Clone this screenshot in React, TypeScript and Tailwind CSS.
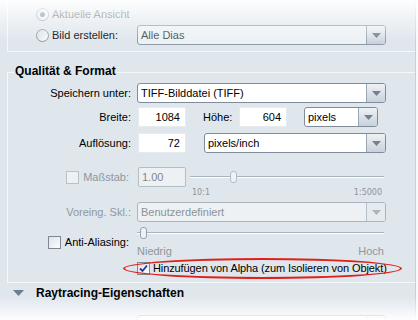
import React from 'react';

const FONT = { fontFamily: '"Liberation Sans", Arial, sans-serif' };

const Arrow = ({ disabled }: { disabled?: boolean }) => (
  <svg width="9" height="5" viewBox="0 0 9 5">
    <path d="M0 0 H9 L4.5 5 Z" fill={disabled ? '#a9b4bd' : '#6f8193'} />
  </svg>
);

const Select = ({
  value,
  width,
  disabled,
  muted,
}: {
  value: string;
  width: string;
  disabled?: boolean;
  muted?: boolean;
}) => (
  <div
    className={`${width} h-[20px] flex rounded-[3px] border ${
      disabled ? 'border-[#aab5be] bg-[#edf1f4] text-[#8a939b]' : muted ? 'border-[#8e9ba7] bg-[#edf1f4] text-[#40464c]' : 'border-[#7f8d9a] bg-white text-black'
    }`}
  >
    <div className="flex-1 flex items-center pl-[3px] text-[11px] leading-none truncate">{value}</div>
    <div
      className={`w-[19px] flex items-center justify-center border-l rounded-r-[2px] ${
        disabled ? 'border-[#b5bfc7] bg-[#e6ebef]' : 'border-[#9aa7b3] bg-linear-to-b from-[#eef2f5] to-[#c8d2db]'
      }`}
    >
      <Arrow disabled={disabled} />
    </div>
  </div>
);

const NumInput = ({ value, disabled, align = 'right' }: { value: string; disabled?: boolean; align?: 'left' | 'right' }) => (
  <div
    className={`w-[48px] h-[20px] flex items-center text-[11px] leading-none ${
      align === 'right' ? 'justify-end pr-[5px]' : 'pl-[3px] border border-[#b4bec6] rounded-[2px]'
    } ${disabled ? 'bg-[#eef1f3] text-[#7e878f]' : 'bg-white border border-[#e6ebef] text-black'}`}
  >
    {value}
  </div>
);

const Checkbox = ({ checked, disabled }: { checked?: boolean; disabled?: boolean }) => (
  <div
    className={`w-[13px] h-[13px] shrink-0 border flex items-center justify-center ${
      disabled ? 'border-[#b9c2c9] bg-[#eef1f3]' : 'border-[#7d8893] bg-linear-to-br from-[#dfe4e8] to-[#fbfcfd]'
    }`}
  >
    {checked && (
      <svg width="9" height="9" viewBox="0 0 9 9">
        <path d="M1 4.5 L3.5 7 L8 1.5" fill="none" stroke="#22369a" strokeWidth="1.8" />
      </svg>
    )}
  </div>
);

const Radio = ({ checked }: { checked?: boolean }) => (
  <div className="w-[13px] h-[13px] shrink-0 rounded-full border border-[#8a96a1] bg-linear-to-br from-[#d6dde3] to-[#fafbfc] flex items-center justify-center">
    {checked && <div className="w-[5px] h-[5px] rounded-full bg-[#4d6f9c]" />}
  </div>
);

const Slider = ({ width, thumb, disabled }: { width: string; thumb: number; disabled?: boolean }) => (
  <div className={`${width} h-[12px] relative flex items-center`}>
    <div className="w-full h-[2px] border-t border-[#aab4bd] border-b border-b-white" />
    <div
      className={`absolute top-0 w-[7px] h-[12px] rounded-[3px] border ${disabled ? 'border-[#b3bcc4]' : 'border-[#98a3ad]'} bg-[#eef2f5]`}
      style={{ left: thumb }}
    />
  </div>
);

const Label = ({ children, disabled }: { children: React.ReactNode; disabled?: boolean }) => (
  <div className={`w-[123px] shrink-0 flex items-center justify-end text-[11px] leading-none ${disabled ? 'text-[#8f979e]' : 'text-black'}`}>
    {children}
  </div>
);

const App = () => {
  return (
    <div className="w-[418px] h-[320px] overflow-hidden relative bg-[#f7f9fa]" style={FONT}>
      <div className="w-[416px] h-full bg-[#dfe6ec] border-r border-[#c8d1d9]">
        {/* Ansicht group */}
        <div className="ml-[7px] h-[52px] border-l border-b border-[#f5f8fa] pt-[4px] flex flex-col gap-[1px]">
          <div className="h-[20px] flex items-center pl-[28px]">
            <Radio checked />
            <span className="ml-[3px] text-[11px] leading-none text-[#4a5259]">Aktuelle Ansicht</span>
          </div>
          <div className="h-[20px] flex items-center">
            <div className="w-[123px] shrink-0 flex items-center pl-[28px]">
              <Radio />
              <span className="ml-[3px] text-[11px] leading-none text-black">Bild erstellen:</span>
            </div>
            <div className="ml-[6px]">
              <Select value="Alle Dias" width="w-[249px]" muted />
            </div>
          </div>
        </div>

        {/* Qualität & Format */}
        <div className="ml-[7px] mt-[20px] border-l border-t border-b border-[#f5f8fa] pb-[6px]">
          <div className="-mt-[9px] ml-[6px] w-fit h-[14px] px-[1px] bg-[#dfe6ec] flex items-center font-bold text-[12px] leading-none text-black">
            Qualität &amp; Format
          </div>

          <div className="mt-[5px] h-[20px] flex items-center">
            <Label>Speichern unter:</Label>
            <div className="ml-[6px]">
              <Select value="TIFF-Bilddatei (TIFF)" width="w-[249px]" />
            </div>
          </div>

          <div className="mt-[4px] h-[20px] flex items-center">
            <Label>Breite:</Label>
            <div className="ml-[7px]">
              <NumInput value="1084" />
            </div>
            <span className="ml-[17px] w-[29px] text-[11px] leading-none">Höhe:</span>
            <div className="ml-[7px]">
              <NumInput value="604" />
            </div>
            <div className="ml-[17px]">
              <Select value="pixels" width="w-[74px]" />
            </div>
          </div>

          <div className="mt-[6px] h-[20px] flex items-center">
            <Label>Auflösung:</Label>
            <div className="ml-[7px]">
              <NumInput value="72" />
            </div>
            <div className="ml-[18px]">
              <Select value="pixels/inch" width="w-[182px]" />
            </div>
          </div>

          <div className="mt-[14px] h-[20px] flex items-center">
            <Label disabled>
              <Checkbox disabled />
              <span className="ml-[4px] mr-[2px]">Maßstab:</span>
            </Label>
            <div className="ml-[7px]">
              <NumInput value="1.00" disabled align="left" />
            </div>
            <div className="ml-[4px]">
              <Slider width="w-[194px]" thumb={40} disabled />
            </div>
          </div>
          <div className="mt-[1px] h-[10px] flex items-center">
            <div className="w-[184px] shrink-0" />
            <div className="w-[190px] flex justify-between text-[8px] leading-none text-[#8c959c]" style={{ fontFamily: '"DejaVu Sans", sans-serif' }}>
              <span>10:1</span>
              <span>1:5000</span>
            </div>
          </div>

          <div className="mt-[4px] h-[20px] flex items-center">
            <Label disabled>Voreing. Skl.:</Label>
            <div className="ml-[6px]">
              <Select value="Benutzerdefiniert" width="w-[249px]" disabled />
            </div>
          </div>

          <div className="mt-[3px] h-[31px] flex items-start">
            <div className="w-[123px] shrink-0 pt-[7px] h-[27px] flex items-center justify-end">
              <Checkbox />
              <span className="ml-[4px] mr-[2px] text-[11px] leading-none text-black">Anti-Aliasing:</span>
            </div>
            <div className="ml-[6px] w-[247px] pt-[2px] flex flex-col">
              <Slider width="w-[247px]" thumb={3} />
              <div className="mt-[7px] h-[10px] flex justify-between text-[11px] leading-none text-[#8f979e]">
                <span>Niedrig</span>
                <span>Hoch</span>
              </div>
            </div>
          </div>

          <div className="mt-[4px] h-[16px] flex items-center relative">
            <div className="w-[123px] shrink-0" />
            <div className="ml-[6px] flex items-center">
              <Checkbox checked />
              <span className="ml-[3px] text-[11px] leading-none tracking-[-0.1px] text-black">
                Hinzufügen von Alpha (zum Isolieren von Objekt)
              </span>
            </div>
          </div>
        </div>

        {/* Raytracing */}
        <div className="mt-[2px] h-[16px] flex items-center pl-[13px]">
          <svg width="11" height="6" viewBox="0 0 11 6">
            <path d="M0 0 H11 L5.5 6 Z" fill="#6a7f93" />
          </svg>
          <span className="ml-[12px] font-bold text-[12px] leading-none text-black">Raytracing-Eigenschaften</span>
        </div>
        <div className="mt-[14px] ml-[137px]">
          <Select value="" width="w-[249px]" />
        </div>
      </div>

      {/* red highlight */}
      <div className="absolute left-[123px] top-[258px] w-[279px] h-[21px] rounded-[50%] border-2 border-[#e0201c]" />

      {/* fades */}
      <div className="absolute inset-x-0 top-0 h-[42px] bg-linear-to-b from-white/95 via-white/45 to-transparent pointer-events-none" />
      <div className="absolute inset-x-0 bottom-0 h-[24px] bg-linear-to-b from-transparent to-white/95 pointer-events-none" />
    </div>
  );
};

export default App;
